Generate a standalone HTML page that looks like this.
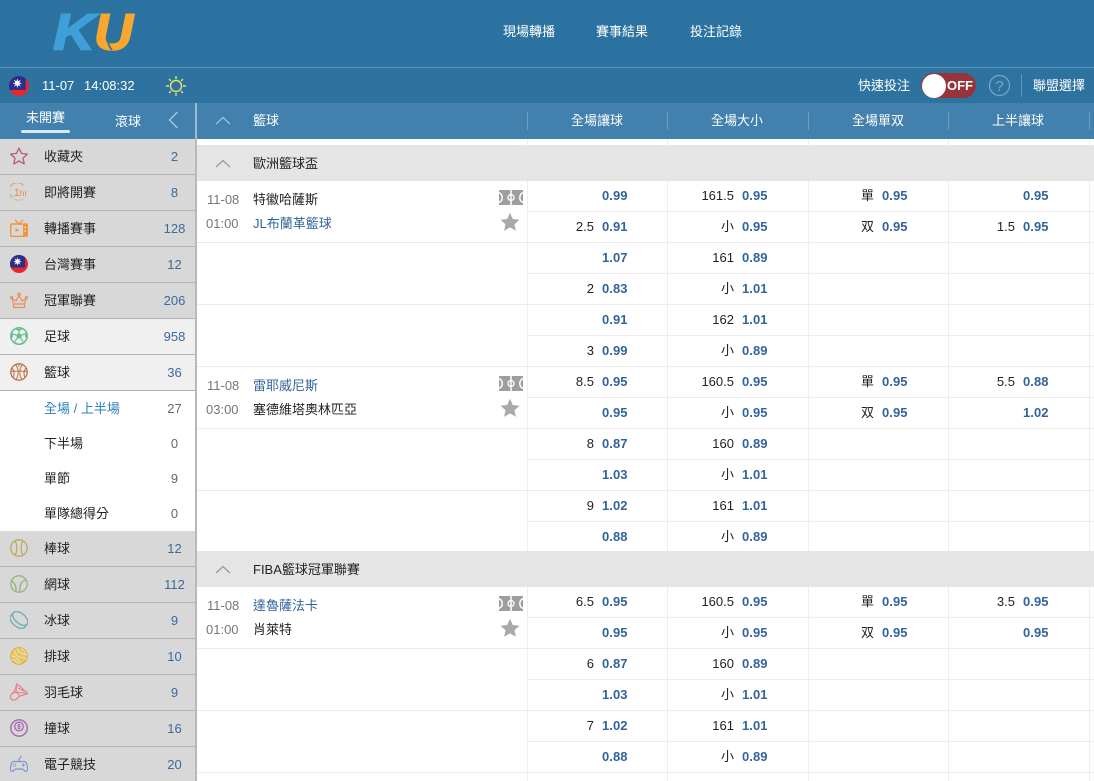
<!DOCTYPE html>
<html lang="zh-Hant">
<head>
<meta charset="utf-8">
<title>KU</title>
<style>
*{box-sizing:border-box;margin:0;padding:0}
html,body{width:1094px;height:781px;overflow:hidden;background:#fff}
body{position:relative;font:13px/1 "Liberation Sans","Noto Sans CJK TC","Noto Sans CJK JP",sans-serif;color:#222}
.abs{position:absolute}
#top{left:0;top:0;width:1094px;height:67px;background:#2b72a0}
#line{left:0;top:67px;width:1094px;height:1px;background:#5c95bb}
#bar{left:0;top:68px;width:1094px;height:35px;background:#2e739f}
.w{color:#fff;white-space:nowrap}
#tabs{left:0;top:103px;width:195px;height:36px;background:#4281ae}
#tabsep{left:195px;top:103px;width:2px;height:36px;background:#9dbbd2}
#cols{left:197px;top:103px;width:897px;height:36px;background:#4281ae}
.h{position:absolute;top:9px;width:1px;height:18px;background:#6c9dc1}
.ht{position:absolute;top:11px;width:140px;text-align:center;color:#fff;white-space:nowrap}
#side{left:0;top:139px;width:195px;height:642px;background:#d8d8d8}
#sideb{left:195px;top:139px;width:2px;height:642px;background:#b9b9b9}
.s{position:relative;height:36px;border-bottom:1px solid #b2b2b2;background:#d8d8d8}
.s.on{background:#f0f0f0}
.s svg{position:absolute;left:10px;top:8px;width:18px;height:18px}
.s span{position:absolute;left:44px;top:11px;white-space:nowrap;color:#222}
.s em{position:absolute;left:154px;width:41px;top:11px;text-align:center;font-style:normal;color:#3b6a9c;padding-right:0}
.u{position:relative;height:35px;background:#fff}
.u span{position:absolute;left:44px;top:11px;white-space:nowrap}
.u em{position:absolute;left:154px;width:41px;top:11px;text-align:center;font-style:normal;color:#666}
#main{left:197px;top:139px;width:897px;height:642px;background:#fff;overflow:hidden}
.g{position:relative;height:36px;background:#e5e5e5;z-index:2}
.g svg{position:absolute;left:18px;top:14px}
.g span{position:absolute;left:56px;top:12px;white-space:nowrap;color:#222}
.r{position:relative;height:31px}
.l{position:absolute;left:0;top:0;width:330px;height:31px}
.bl{border-bottom:1px solid #eaeaea}
.c{position:absolute;top:0;height:31px;width:141px;border-left:1px solid #eee;border-bottom:1px solid #eee;text-align:right;padding:7px 40px 0 0;white-space:nowrap;line-height:15px;color:#222}
.c b{display:inline-block;width:26px;text-align:left;color:#32639b;font-weight:700;margin-left:8px;letter-spacing:.05px}
.c1{left:330px}.c2{left:470px;width:141px}.c3{left:611px;width:140px}.c4{left:751px;width:141px}.c5{left:892px;width:5px;padding:0}
.info{position:absolute;left:0;top:0;width:330px;height:62px;z-index:1}
.info i{position:absolute;font-style:normal;white-space:nowrap;color:#777}
.info u{position:absolute;left:56px;text-decoration:none;white-space:nowrap;color:#222}
.info u.b{color:#32639b}
.court{position:absolute;left:302px;top:9px}
.st{position:absolute;left:303px;top:31px}
.vv{position:absolute;top:0;width:1px;height:6px;background:#eee}
</style>
</head>
<body>
<svg width="0" height="0" style="position:absolute">
<defs>
<symbol id="flag" viewBox="0 0 18 18">
<circle cx="9" cy="9" r="9" fill="#e8262d"/>
<path d="M.7 12.500A9 9 0 0 1 15 2.300V12.500z" fill="#2a2f8f"/>
<path d="M7.500 3v7M4 6.500h7M5 4l5 5M10 4l-5 5" stroke="#fff" stroke-width=".7" stroke-linecap="round"/>
<circle cx="7.500" cy="6.500" r="2.300" fill="#fff"/>
</symbol>
<symbol id="court" viewBox="0 0 24 15">
<rect width="24" height="15" fill="#9e9e9e"/>
<path d="M12 0v15M0 2.500a5.500 5.500 0 0 1 0 10M24 2.500a5.500 5.500 0 0 0 0 10" fill="none" stroke="#fff" stroke-width="1.500"/>
<circle cx="12" cy="7.500" r="3" fill="none" stroke="#fff" stroke-width="1.300"/>
</symbol>
<symbol id="gstar" viewBox="0 0 20 20">
<path d="M10 .8l2.800 6.200 6.700.7-5 4.500 1.400 6.600L10 15.400l-5.900 3.400 1.400-6.600-5-4.500 6.700-.7z" fill="#a9a9a9"/>
</symbol>
<symbol id="up" viewBox="0 0 16 9">
<path d="M1 8l7-6.500L15 8" fill="none" stroke="#9a9a9a" stroke-width="1.300"/>
</symbol>
</defs>
</svg>

<div class="abs" id="top"></div>
<div class="abs" id="line"></div>
<div class="abs" id="bar"></div>

<svg class="abs" style="left:50px;top:8px" width="90" height="46" viewBox="0 0 90 46">
<text x="3" y="41.500" font-family="Liberation Sans" font-weight="700" font-style="italic" font-size="51" fill="#3f9fd8" stroke="#3f9fd8" stroke-width="1.600" textLength="42" lengthAdjust="spacingAndGlyphs">K</text>
<text x="44" y="41.500" font-family="Liberation Sans" font-weight="700" font-style="italic" font-size="51" fill="#f9a72f" stroke="#f9a72f" stroke-width="1.600" textLength="39" lengthAdjust="spacingAndGlyphs">U</text>
<path d="M58 27c-1 6 0 10 4 15" fill="none" stroke="#2b72a0" stroke-width="1.600"/>
</svg>

<div class="abs w" style="left:503px;top:25px">現場轉播</div>
<div class="abs w" style="left:596px;top:25px">賽事結果</div>
<div class="abs w" style="left:690px;top:25px">投注記錄</div>

<svg class="abs" style="left:9px;top:76px" width="20" height="20"><use href="#flag" width="20" height="20"/></svg>
<div class="abs w" style="left:42px;top:79px">11-07</div>
<div class="abs w" style="left:84px;top:79px">14:08:32</div>
<svg class="abs" style="left:165px;top:75px" width="22" height="22" viewBox="0 0 22 22">
<circle cx="11" cy="11" r="5.500" fill="none" stroke="#e6e265" stroke-width="1.400"/>
<path d="M11 1v3M11 18v3M1 11h3M18 11h3M4 4l2 2M16 16l2 2M18 4l-2 2M6 16l-2 2" stroke="#e6e265" stroke-width="1.400"/>
</svg>

<div class="abs w" style="left:858px;top:79px">快速投注</div>
<div class="abs" style="left:921px;top:73px;width:55px;height:25px;border-radius:13px;background:#96343a"></div>
<div class="abs" style="left:922px;top:74px;width:24px;height:24px;border-radius:50%;background:#fff"></div>
<div class="abs w" style="left:947px;top:79px;font-weight:700;font-size:13px">OFF</div>
<svg class="abs" style="left:988px;top:74px" width="23" height="23" viewBox="0 0 23 23">
<circle cx="11.500" cy="11.500" r="10" fill="none" stroke="#7ba5c4" stroke-width="1.200"/>
<text x="11.500" y="17" text-anchor="middle" font-family="Liberation Sans" font-size="15" fill="#7ba5c4">?</text>
</svg>
<div class="abs" style="left:1021px;top:74px;width:1px;height:23px;background:#5c95bb"></div>
<div class="abs w" style="left:1033px;top:79px">聯盟選擇</div>

<div class="abs" id="tabs"></div>
<div class="abs" id="tabsep"></div>
<div class="abs w" style="left:26px;top:111px">未開賽</div>
<div class="abs" style="left:21px;top:130px;width:49px;height:3px;border-radius:2px;background:#d3eefa"></div>
<div class="abs w" style="left:115px;top:115px">滾球</div>
<svg class="abs" style="left:168px;top:111px" width="11" height="18" viewBox="0 0 11 18"><path d="M9.500 1L1.500 9l8 8" fill="none" stroke="#a9c8de" stroke-width="1.400"/></svg>

<div class="abs" id="cols">
<svg style="position:absolute;left:18px;top:13px" width="16" height="9" viewBox="0 0 16 9"><path d="M1 8l7-6.500L15 8" fill="none" stroke="#9cc0da" stroke-width="1.300"/></svg>
<div class="ht" style="left:56px;width:auto">籃球</div>
<div class="h" style="left:330px"></div><div class="ht" style="left:330px">全場讓球</div>
<div class="h" style="left:470px"></div><div class="ht" style="left:470px">全場大小</div>
<div class="h" style="left:611px"></div><div class="ht" style="left:611px">全場單双</div>
<div class="h" style="left:751px"></div><div class="ht" style="left:751px">上半讓球</div>
<div class="h" style="left:892px"></div>
</div>

<div class="abs" id="side">
<div class="s"><svg viewBox="0 0 18 18"><path d="M9 1.200l2.500 5.200 5.900.7-4.400 4 1.200 5.800L9 14l-5.200 2.900L5 11.100l-4.400-4 5.900-.7z" fill="none" stroke="#b95b70" stroke-width="1.300" stroke-linejoin="round"/></svg><span>收藏夾</span><em>2</em></div>
<div class="s"><svg viewBox="0 0 18 18"><path d="M13.500 2.500A8.200 8.200 0 1 0 2.500 14.500" fill="none" stroke="#d9a272" stroke-width="1.200"/><path d="M4.500 16a8.200 8.200 0 0 0 9 0" fill="none" stroke="#d9a272" stroke-width="1.200" stroke-dasharray="1 1.200"/><text x="3.800" y="13" font-family="Liberation Sans" font-size="11" fill="#d5925a">1</text><text x="9.800" y="13" font-family="Liberation Sans" font-size="8.500" fill="#d5925a">hr</text></svg><span>即將開賽</span><em>8</em></div>
<div class="s"><svg viewBox="0 0 18 18"><rect x=".7" y="5" width="16.600" height="12.300" rx="1.200" fill="none" stroke="#f1963f" stroke-width="1.400"/><path d="M5 .8L9 5l4-4.200" fill="none" stroke="#f1963f" stroke-width="1.300"/><path d="M13 5h4.500v12.500H13z" fill="#f1963f"/><path d="M5.500 9l3.500 2-3.500 2z" fill="#f1963f"/><path d="M14.500 8.500h1.500M14.500 12h1.500" stroke="#fff" stroke-width="1.100"/></svg><span>轉播賽事</span><em>128</em></div>
<div class="s"><svg viewBox="0 0 18 18"><use href="#flag" width="18" height="18"/></svg><span>台灣賽事</span><em>12</em></div>
<div class="s"><svg viewBox="0 0 18 18"><path d="M3.500 13L2 7.500 6 10l3-5.500 3 5.500 4-2.500L14.500 13zM3.500 13v3.500h11V13" fill="none" stroke="#e68f5e" stroke-width="1.200"/><circle cx="9" cy="3.200" r="1.300" fill="none" stroke="#e68f5e" stroke-width="1.100"/><circle cx="1.500" cy="6.500" r="1.100" fill="none" stroke="#e68f5e"/><circle cx="16.500" cy="6.500" r="1.100" fill="none" stroke="#e68f5e"/></svg><span>冠軍聯賽</span><em>206</em></div>
<div class="s on"><svg viewBox="0 0 18 18"><circle cx="9" cy="9" r="8.200" fill="none" stroke="#67bd8d" stroke-width="1.500"/><path d="M9 5.800l3 2.200-1.100 3.500H7.100L6 8z" fill="#67bd8d"/><path d="M9 5.800V2M12 8l3.600-1.200M10.900 11.500l2.300 3M7.100 11.500l-2.300 3M6 8L2.400 6.800" stroke="#67bd8d" stroke-width="1.200"/><path d="M6 1.600L9 3.200l3-1.600M16.500 5.500l-.7 3.700 1.400 1.600M13.500 15.500l-2.500 1.700M4.500 15.500L7 17.200M1.500 5.500l.7 3.700L.8 10.800" fill="none" stroke="#67bd8d" stroke-width="1.700"/></svg><span>足球</span><em>958</em></div>
<div class="s on"><svg viewBox="0 0 18 18"><circle cx="9" cy="9" r="8.200" fill="none" stroke="#bd7046" stroke-width="1.300"/><path d="M9 .8v3M5.500 1.600C9 6 9 12 6 16.500M12.500 1.600C9 6 9 12 12 16.500M2 4.800c2.500 3 2.700 6 1 10M16 4.800c-2.500 3-2.700 6-1 10M1 8.500c3-.5 13-.5 16 0" fill="none" stroke="#bd7046" stroke-width="1"/></svg><span>籃球</span><em>36</em></div>
<div class="u"><span style="color:#2a80c2">全場 / 上半場</span><em>27</em></div>
<div class="u"><span>下半場</span><em>0</em></div>
<div class="u"><span>單節</span><em>9</em></div>
<div class="u"><span>單隊總得分</span><em>0</em></div>
<div class="s"><svg viewBox="0 0 18 18"><circle cx="9" cy="9" r="8.200" fill="none" stroke="#bba95c" stroke-width="1.300"/><path d="M5 1.800c2.500 4 2.500 10.400 0 14.400M13 1.800c-2.500 4-2.500 10.400 0 14.400" fill="none" stroke="#bba95c" stroke-width="1.200"/></svg><span>棒球</span><em>12</em></div>
<div class="s"><svg viewBox="0 0 18 18"><circle cx="9" cy="9" r="8.200" fill="none" stroke="#95b47e" stroke-width="1.300"/><path d="M1.500 6c3.500 2 5 5.500 4.500 10.500M16 5c-3.500.5-7 4-6 12" fill="none" stroke="#95b47e" stroke-width="1.300"/></svg><span>網球</span><em>112</em></div>
<div class="s"><svg viewBox="0 0 18 18"><g transform="rotate(40 9 9)" fill="none" stroke="#76aeae" stroke-width="1.400"><ellipse cx="9" cy="7" rx="9" ry="5"/><path d="M0 7v4c0 2.800 4 5 9 5s9-2.200 9-5V7"/></g></svg><span>冰球</span><em>9</em></div>
<div class="s"><svg viewBox="0 0 18 18"><circle cx="9" cy="9" r="8.300" fill="#e4c566" stroke="#d6b044" stroke-width="1.100"/><path d="M7 1.200c1 3 4 6 10 6.500M4 2.800c1 5 4 8 12.500 8.700M1 9c4 0 7 2 9.500 7.500M1.800 12.500c3 .5 5 2 6 4.500M11 1.500c2 1 4 3 5 5" fill="none" stroke="#f2e4ae" stroke-width="1"/></svg><span>排球</span><em>10</em></div>
<div class="s"><svg viewBox="0 0 18 18"><path d="M7 .8L18 10.500 10 13c-2 1-3.500 4.300-6.500 4.200C1.500 17 .2 15.200.5 13c.4-2.300 3-3 4.300-5.500z" fill="none" stroke="#e77f8e" stroke-width="1.200"/><path d="M7 .8L6 9l12 1.500M1.500 11L6 9l4 4M8 5l6 3" fill="none" stroke="#e77f8e" stroke-width="1"/></svg><span>羽毛球</span><em>9</em></div>
<div class="s"><svg viewBox="0 0 18 18"><circle cx="9" cy="9" r="8.200" fill="none" stroke="#a368b6" stroke-width="1.400"/><circle cx="9" cy="7.500" r="4.300" fill="none" stroke="#a368b6" stroke-width="1.300"/><path d="M9 5.300a1 1 0 1 1 0 2.100 1 1 0 1 1 0-2.100zm0 2.100a1.100 1.100 0 1 1 0 2.200 1.100 1.100 0 1 1 0-2.200z" fill="none" stroke="#a368b6" stroke-width=".9"/></svg><span>撞球</span><em>16</em></div>
<div class="s"><svg viewBox="0 0 18 18"><path d="M4 6.500h10c1.500 0 2.500 1 3 3l.7 4.500c.2 2-2 3-3.300 1.500L12.500 14h-7l-1.900 1.500C2.300 17 .1 16 .3 14L1 9.500c.5-2 1.500-3 3-3z" fill="none" stroke="#7e95d6" stroke-width="1.200"/><path d="M9 6.500V4c0-1 2-1 2-2V.5M12 10h3M13.500 8.500v3" fill="none" stroke="#7e95d6" stroke-width="1.100"/><circle cx="4.500" cy="10" r="1.300" fill="none" stroke="#7e95d6" stroke-width=".9" stroke-dasharray="1 .6"/></svg><span>電子競技</span><em>20</em></div>
</div>
<div class="abs" id="sideb"></div>

<div class="abs" id="main">
<div style="height:6px;position:relative"><div class="vv" style="left:330px"></div><div class="vv" style="left:470px"></div><div class="vv" style="left:611px"></div><div class="vv" style="left:751px"></div><div class="vv" style="left:892px"></div></div>

<div class="g"><svg width="16" height="9"><use href="#up" width="16" height="9"/></svg><span>歐洲籃球盃</span></div>

<div style="position:relative">
<div class="info"><i style="left:10px;top:12px">11-08</i><i style="left:9px;top:36px">01:00</i><u style="top:12px">特徽哈薩斯</u><u class="b" style="top:36px">JL布蘭革籃球</u><svg class="court" width="24" height="15"><use href="#court" width="24" height="15"/></svg><svg class="st" width="20" height="20"><use href="#gstar" width="20" height="20"/></svg></div>
<div class="r"><div class="c c1"><b>0.99</b></div><div class="c c2">161.5<b>0.95</b></div><div class="c c3">單<b>0.95</b></div><div class="c c4"><b>0.95</b></div><div class="c c5"></div></div>
<div class="r"><div class="l bl"></div><div class="c c1">2.5<b>0.91</b></div><div class="c c2">小<b>0.95</b></div><div class="c c3">双<b>0.95</b></div><div class="c c4">1.5<b>0.95</b></div><div class="c c5"></div></div>
<div class="r"><div class="c c1"><b>1.07</b></div><div class="c c2">161<b>0.89</b></div><div class="c c3"></div><div class="c c4"></div><div class="c c5"></div></div>
<div class="r"><div class="l bl"></div><div class="c c1">2<b>0.83</b></div><div class="c c2">小<b>1.01</b></div><div class="c c3"></div><div class="c c4"></div><div class="c c5"></div></div>
<div class="r"><div class="c c1"><b>0.91</b></div><div class="c c2">162<b>1.01</b></div><div class="c c3"></div><div class="c c4"></div><div class="c c5"></div></div>
<div class="r"><div class="l bl"></div><div class="c c1">3<b>0.99</b></div><div class="c c2">小<b>0.89</b></div><div class="c c3"></div><div class="c c4"></div><div class="c c5"></div></div>
</div>

<div style="position:relative">
<div class="info"><i style="left:10px;top:12px">11-08</i><i style="left:9px;top:36px">03:00</i><u class="b" style="top:12px">雷耶威尼斯</u><u style="top:36px">塞德維塔奧林匹亞</u><svg class="court" width="24" height="15"><use href="#court" width="24" height="15"/></svg><svg class="st" width="20" height="20"><use href="#gstar" width="20" height="20"/></svg></div>
<div class="r"><div class="c c1">8.5<b>0.95</b></div><div class="c c2">160.5<b>0.95</b></div><div class="c c3">單<b>0.95</b></div><div class="c c4">5.5<b>0.88</b></div><div class="c c5"></div></div>
<div class="r"><div class="l bl"></div><div class="c c1"><b>0.95</b></div><div class="c c2">小<b>0.95</b></div><div class="c c3">双<b>0.95</b></div><div class="c c4"><b>1.02</b></div><div class="c c5"></div></div>
<div class="r"><div class="c c1">8<b>0.87</b></div><div class="c c2">160<b>0.89</b></div><div class="c c3"></div><div class="c c4"></div><div class="c c5"></div></div>
<div class="r"><div class="l bl"></div><div class="c c1"><b>1.03</b></div><div class="c c2">小<b>1.01</b></div><div class="c c3"></div><div class="c c4"></div><div class="c c5"></div></div>
<div class="r"><div class="c c1">9<b>1.02</b></div><div class="c c2">161<b>1.01</b></div><div class="c c3"></div><div class="c c4"></div><div class="c c5"></div></div>
<div class="r" style="margin-bottom:-2px"><div class="l bl"></div><div class="c c1"><b>0.88</b></div><div class="c c2">小<b>0.89</b></div><div class="c c3"></div><div class="c c4"></div><div class="c c5"></div></div>
</div>

<div class="g"><svg width="16" height="9"><use href="#up" width="16" height="9"/></svg><span>FIBA籃球冠軍聯賽</span></div>

<div style="position:relative">
<div class="info"><i style="left:10px;top:12px">11-08</i><i style="left:9px;top:36px">01:00</i><u class="b" style="top:12px">達魯薩法卡</u><u style="top:36px">肖萊特</u><svg class="court" width="24" height="15"><use href="#court" width="24" height="15"/></svg><svg class="st" width="20" height="20"><use href="#gstar" width="20" height="20"/></svg></div>
<div class="r"><div class="c c1">6.5<b>0.95</b></div><div class="c c2">160.5<b>0.95</b></div><div class="c c3">單<b>0.95</b></div><div class="c c4">3.5<b>0.95</b></div><div class="c c5"></div></div>
<div class="r"><div class="l bl"></div><div class="c c1"><b>0.95</b></div><div class="c c2">小<b>0.95</b></div><div class="c c3">双<b>0.95</b></div><div class="c c4"><b>0.95</b></div><div class="c c5"></div></div>
<div class="r"><div class="c c1">6<b>0.87</b></div><div class="c c2">160<b>0.89</b></div><div class="c c3"></div><div class="c c4"></div><div class="c c5"></div></div>
<div class="r"><div class="l bl"></div><div class="c c1"><b>1.03</b></div><div class="c c2">小<b>1.01</b></div><div class="c c3"></div><div class="c c4"></div><div class="c c5"></div></div>
<div class="r"><div class="c c1">7<b>1.02</b></div><div class="c c2">161<b>1.01</b></div><div class="c c3"></div><div class="c c4"></div><div class="c c5"></div></div>
<div class="r"><div class="l bl"></div><div class="c c1"><b>0.88</b></div><div class="c c2">小<b>0.89</b></div><div class="c c3"></div><div class="c c4"></div><div class="c c5"></div></div>
</div>
<div style="height:8px;position:relative"><div class="vv" style="left:330px;height:8px"></div><div class="vv" style="left:470px;height:8px"></div><div class="vv" style="left:611px;height:8px"></div><div class="vv" style="left:751px;height:8px"></div><div class="vv" style="left:892px;height:8px"></div></div>
</div>
</body>
</html>
